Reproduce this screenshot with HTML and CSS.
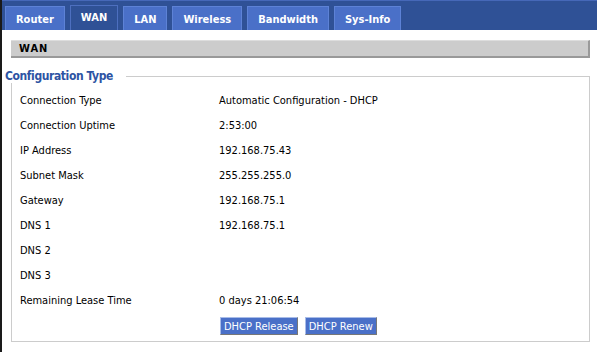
FILE: index.html
```html
<!DOCTYPE html>
<html lang="en">
  <head>
    <meta charset="UTF-8" />
    <meta name="viewport" content="width=device-width, initial-scale=1.0" />
    <title>WAN</title>
    <link rel="stylesheet" href="styles.css">
  </head>
  <body>
    <div class="tabbar">
      <a class="tab" href="#">Router</a>
      <a class="tab active" href="#">WAN</a>
      <a class="tab" href="#">LAN</a>
      <a class="tab" href="#">Wireless</a>
      <a class="tab" href="#">Bandwidth</a>
      <a class="tab" href="#">Sys-Info</a>
    </div>
    <div class="content">
      <h2 class="section">WAN</h2>
      <fieldset class="group">
        <legend>Configuration Type</legend>
        <div class="rows">
          <div class="label">Connection Type</div>
          <div class="value">Automatic Configuration - DHCP</div>
          <div class="label">Connection Uptime</div>
          <div class="value">2:53:00</div>
          <div class="label">IP Address</div>
          <div class="value">192.168.75.43</div>
          <div class="label">Subnet Mask</div>
          <div class="value">255.255.255.0</div>
          <div class="label">Gateway</div>
          <div class="value">192.168.75.1</div>
          <div class="label">DNS 1</div>
          <div class="value">192.168.75.1</div>
          <div class="label">DNS 2</div>
          <div class="value"></div>
          <div class="label">DNS 3</div>
          <div class="value"></div>
          <div class="label">Remaining Lease Time</div>
          <div class="value">0 days 21:06:54</div>
        </div>
        <div class="actions">
          <button type="button">DHCP Release</button>
          <button type="button">DHCP Renew</button>
        </div>
      </fieldset>
    </div>
  </body>
</html>
```

FILE: styles.css
```css
body {
  margin: 0;
  border-left: 2px solid #1a1a1a;
  min-height: 352px;
  box-sizing: border-box;
  font-family: "DejaVu Sans Condensed", "DejaVu Sans", sans-serif;
  font-size: 11px;
  color: #000;
  background: #fff;
}
.tabbar {
  display: flex;
  align-items: flex-end;
  gap: 5px;
  height: 30px;
  box-sizing: border-box;
  padding-left: 3px;
  background: #2f5196;
  border-top: 1px solid #4668b8;
}
.tab {
  display: block;
  height: 24px;
  line-height: 25px;
  box-sizing: border-box;
  padding: 0 10px;
  background: #4a70c8;
  border: 1px solid #5d82d6;
  border-bottom: none;
  color: #fff;
  font-weight: bold;
  text-decoration: none;
}
.tab.active {
  height: 25px;
  line-height: 23px;
  background: #2f5196;
  border-color: #4d6fbf;
}
.content {
  padding: 10px 7px 0 9px;
}
.section {
  margin: 0;
  height: 18px;
  box-sizing: border-box;
  padding-left: 8px;
  line-height: 16px;
  font-size: 11px;
  font-weight: bold;
  letter-spacing: 1px;
  background: #cccccc;
  border-top: 1px solid #dddddd;
  border-right: 2px solid #999999;
  border-bottom: 2px solid #999999;
}
.group {
  margin: 11px 0 0;
  padding: 5px 8px 6px;
  border: 1px solid #cccccc;
}
.group legend {
  margin-left: -15px;
  padding: 0 13px 0 0;
  color: #2d53a3;
  font-weight: bold;
  font-size: 12px;
  letter-spacing: -0.4px;
}
.rows {
  display: grid;
  grid-template-columns: 199px auto;
  grid-auto-rows: 25px;
  align-items: center;
}
.actions {
  display: flex;
  gap: 7px;
  padding: 4px 0 0 200px;
}
.actions button {
  height: 18px;
  padding: 0 3px;
  font-family: inherit;
  font-size: 11px;
  color: #fff;
  background: #4a70c8;
  border: 1px solid;
  border-color: #a8bce8 #777 #777 #a8bce8;
}
```
